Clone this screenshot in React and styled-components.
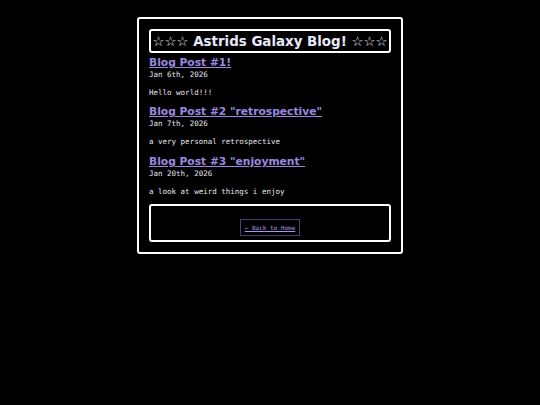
import React from 'react';
import styled, { createGlobalStyle } from 'styled-components';

const posts = [
  { title: 'Blog Post #1!', date: 'Jan 6th, 2026', blurb: 'Hello world!!!' },
  { title: 'Blog Post #2 "retrospective"', date: 'Jan 7th, 2026', blurb: 'a very personal retrospective' },
  { title: 'Blog Post #3 "enjoyment"', date: 'Jan 20th, 2026', blurb: 'a look at weird things i enjoy' },
];

const App = () => {
  return (
    <>
      <GlobalStyle />
      <Page>
        <Banner>☆☆☆ Astrids Galaxy Blog! ☆☆☆</Banner>
        {posts.map(post => (
          <Post key={post.title}>
            <PostTitle href="#">{post.title}</PostTitle>
            <PostDate>{post.date}</PostDate>
            <PostBlurb>{post.blurb}</PostBlurb>
          </Post>
        ))}
        <Footer>
          <HomeButton href="#">← Back to Home</HomeButton>
        </Footer>
      </Page>
    </>
  );
};

const GlobalStyle = createGlobalStyle`
  body {
    margin: 0;
    background: #000;
    color: #e6e6f0;
    font-family: 'DejaVu Sans Mono', monospace;
  }
`;

const Page = styled.main`
  width: 242px;
  margin: 17px auto 0;
  padding: 10px;
  border: 2px solid #fff;
  border-radius: 3px;
  display: flex;
  flex-direction: column;
`;

const Banner = styled.h1`
  margin: 0;
  height: 20px;
  border: 2px solid #fff;
  border-radius: 3px;
  display: flex;
  align-items: center;
  justify-content: center;
  font-family: 'DejaVu Sans', sans-serif;
  font-size: 13.4px;
  font-weight: bold;
  color: #e8e8f8;
  white-space: nowrap;
`;

const Post = styled.article`
  display: flex;
  flex-direction: column;
`;

const PostTitle = styled.a`
  align-self: flex-start;
  font-family: 'DejaVu Sans', sans-serif;
  font-size: 10.7px;
  font-weight: bold;
  color: #9a88e0;
  text-decoration: underline;
  line-height: 13px;
  margin-top: 2.7px;
`;

const PostDate = styled.div`
  font-size: 7.5px;
  line-height: 10px;
  margin-top: 1px;
  color: #e6e6f0;
`;

const PostBlurb = styled.p`
  font-size: 7.5px;
  line-height: 10px;
  margin: 8px 0 5px;
  color: #e6e6f0;
`;

const Footer = styled.footer`
  margin-top: 2px;
  height: 34px;
  border: 2px solid #fff;
  border-radius: 3px;
  display: flex;
  align-items: center;
  justify-content: center;
`;

const HomeButton = styled.a`
  margin-top: 8px;
  padding: 4px 4px;
  border: 1px solid #4a4070;
  font-size: 6px;
  color: #a898e8;
  text-decoration: underline;
`;

export default App;
